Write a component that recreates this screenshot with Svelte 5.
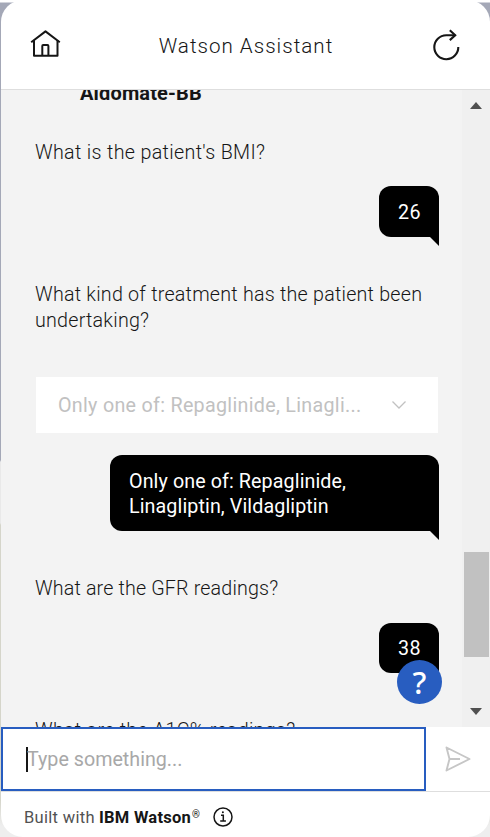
<script>
  let draft = $state('');
</script>

<div class="page">
  <div class="widget">
    <header>
      <svg class="home" width="32" height="32" viewBox="0 0 32 32" fill="none" stroke="#161616" stroke-width="2" stroke-linejoin="round">
        <path d="M2.2 13.2 16.5 2.4l14.3 10.8" />
        <path d="M5 11v15.8h23.5V11M13.3 26.8V17q0-.9.9-.9h4.3q.9 0 .9.9v9.8" />
      </svg>
      <h1>Watson Assistant</h1>
      <svg class="restart" width="32" height="32" viewBox="0 0 32 32" fill="none" stroke="#161616" stroke-width="2.1">
        <path d="M28.3 18a12 12 0 1 1-12-11.8h9" />
        <path d="m19.8 1.3 5.4 4.9-5.4 4.9" />
      </svg>
    </header>

    <main>
      <div class="messages">
        <div class="option">Aldomate-BB</div>
        <p class="bot bmi">What is the patient's BMI?</p>
        <div class="bubble small first">26</div>
        <p class="bot kind">What kind of treatment has the patient been<br />undertaking?</p>
        <div class="select">
          <span>Only one of: Repaglinide, Linagli...</span>
          <svg width="16" height="10" viewBox="0 0 16 10" fill="none" stroke="#c1c1c1" stroke-width="1.3"><path d="m1.5 1.5 6.5 6.5 6.5-6.5" /></svg>
        </div>
        <div class="bubble wide">Only one of: Repaglinide,<br />Linagliptin, Vildagliptin</div>
        <p class="bot gfr">What are the GFR readings?</p>
        <div class="bubble small third">38</div>
        <p class="bot a1c">What are the A1C% readings?</p>
      </div>
      <div class="scrollbar">
        <i class="arrow up"></i>
        <i class="thumb"></i>
        <i class="arrow down"></i>
      </div>
      <button class="help" aria-label="Help">?</button>
    </main>

    <div class="composer">
      <div class="field">
        <i class="caret"></i>
        <input bind:value={draft} placeholder="Type something..." />
      </div>
      <svg width="28" height="28" viewBox="0 0 28 28" fill="none" stroke="#c6c6c6" stroke-width="1.9" stroke-linejoin="round">
        <path d="M2.5 2.5 25.5 14 2.5 25.5 5.5 14ZM5.5 14h10.5" />
      </svg>
    </div>

    <footer>
      <span class="built">Built with</span>
      <b>IBM Watson</b><span class="reg">®</span>
      <svg width="20" height="20" viewBox="0 0 20 20" fill="none" stroke="#161616" stroke-width="1.5">
        <circle cx="10" cy="10" r="9" />
        <path d="M8 8.3h2.3v5.5M7.2 14.1h5.7" />
        <circle cx="9.9" cy="5.3" r="1" fill="#161616" stroke="none" />
      </svg>
    </footer>
  </div>
</div>

<style>
  :global(body) { margin: 0; }
  .page {
    width: 490px; height: 837px; box-sizing: border-box; padding-left: 1px; overflow: hidden;
    font-family: Roboto, "Liberation Sans", sans-serif; color: #161616;
    background: linear-gradient(to bottom, #fff 0 2px, #a4a8b7 3px 460px, #e9e9e9 462px 523px, #d5d5ca 525px 800px, #eee 826px);
  }
  .widget {
    height: 837px; display: flex; flex-direction: column; background: #fff;
    border-radius: 22px; overflow: hidden;
  }
  header {
    height: 89px; flex: none; display: flex; align-items: center;
    border-bottom: 1px solid #dedede; padding: 0 28px; box-sizing: content-box;
  }
  h1 { flex: 1; margin: 2px 0 0; padding-left: 1px; text-align: center; font-size: 20.6px; font-weight: 300; letter-spacing: 1px; white-space: nowrap; }
  main { position: relative; flex: none; height: 637px; display: flex; overflow: hidden; background: #f3f3f3; }
  .messages { width: 461px; box-sizing: border-box; padding: 0 23px 0 34px; display: flex; flex-direction: column; overflow: hidden; }
  .messages > * { flex: none; white-space: nowrap; }
  .option { height: 26px; margin: -10px 0 0 45px; line-height: 26px; font-size: 20px; font-weight: 700; letter-spacing: 0.15px; }
  .bot { margin: 0; font-size: 19.7px; line-height: 26px; font-weight: 300; letter-spacing: 0.23px; }
  .bmi { margin-top: 34px; letter-spacing: 0.33px; }
  .bubble {
    position: relative; align-self: flex-end; box-sizing: border-box; background: #000; color: #fff;
    border-radius: 12px 12px 0 12px; font-size: 19.7px; line-height: 25px; padding: 14px 19px 12px;
    letter-spacing: 0.1px;
  }
  .bubble::after { content: ""; position: absolute; right: 0; top: 100%; border-top: 9px solid #000; border-left: 9px solid transparent; }
  .small { width: 60px; height: 51px; padding: 14px 0 0 19px; letter-spacing: 0.4px; }
  .first { margin-top: 20px; }
  .kind { margin-top: 45px; }
  .select {
    height: 56px; width: 402px; margin: 43px 0 0 1px; box-sizing: border-box; background: #fff; color: #c1c1c1;
    display: flex; align-items: center; justify-content: space-between; padding: 0 31px 0 22px; font-size: 19.7px;
    letter-spacing: 0.3px;
  }
  .wide { width: 329px; height: 76px; margin-top: 22px; }
  .gfr { margin-top: 45px; letter-spacing: 0.15px; }
  .third { margin-top: 21px; height: 50px; padding-top: 13px; }
  .a1c { margin-top: 45px; letter-spacing: 0.28px; }
  .scrollbar { width: 28px; background: #f0f0f0; display: flex; flex-direction: column; align-items: center; }
  .arrow { border: solid transparent; border-width: 0 6.5px; flex: none; }
  .up { margin-top: 12px; border-bottom: 7px solid #505050; }
  .thumb { width: 25px; height: 105px; margin-top: 443px; background: #c1c1c1; }
  .down { margin-top: 51px; border-top: 7px solid #505050; }
  .help {
    position: absolute; left: 396px; top: 570px; width: 45px; height: 44px; border: 0; padding: 0; border-radius: 50%;
    background: #285dc0; color: #fff; font: 500 31px/44px "Noto Sans", sans-serif;
  }
  .composer { height: 64px; flex: none; display: flex; align-items: center; border-bottom: 1px solid #dedede; }
  .composer > svg { margin-left: 18px; }
  .field { width: 425px; height: 64px; box-sizing: border-box; border: 2px solid #285dc0; display: flex; align-items: center; padding-left: 23px; }
  .caret { width: 2px; height: 25px; background: #161616; margin-right: -1px; }
  input { flex: 1; min-width: 0; border: 0; outline: 0; padding: 2px 0 0; background: transparent; font: 400 19.7px/26px Roboto, sans-serif; letter-spacing: 0; }
  input::placeholder { color: #a8a8a8; opacity: 1; }
  footer { flex: 1; display: flex; align-items: center; padding: 4px 0 0 23px; font-size: 16.5px; white-space: nowrap; }
  .built { width: 75px; font-weight: 400; color: #525252; letter-spacing: 0.3px; margin-top: 2px; }
  footer b { width: 93px; font-weight: 700; letter-spacing: 0.25px; margin-top: 2px; }
  .reg { font-size: 10px; width: 21px; padding-bottom: 4px; }
</style>
